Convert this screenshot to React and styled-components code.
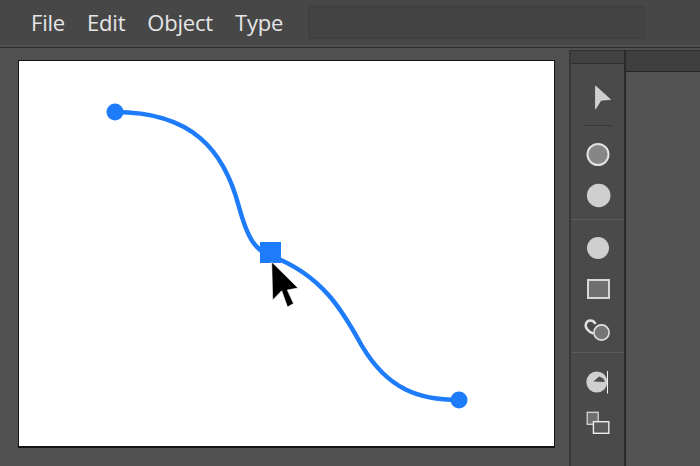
import React from "react";
import styled, { createGlobalStyle } from "styled-components";

const Global = createGlobalStyle`
  html, body { margin: 0; padding: 0; background: #505050; }
  body { width: 700px; height: 466px; overflow: hidden; font-family: "Open Sans", "Noto Sans", sans-serif; }
`;
const Window = styled.div`width:700px;height:466px;display:flex;flex-direction:column;background:#505050;`;
const MenuBar = styled.header`
  height:45px;flex:none;display:flex;align-items:center;box-sizing:content-box;
  background:#474747;border-bottom:2px solid #4f4f4f;box-shadow:0 1px 0 #2b2b2b;
  padding-left:31px;
`;
const Menu = styled.nav`display:flex;gap:22px;width:277px;flex:none;`;
const MenuItem = styled.span`font-size:22px;line-height:30px;color:#e6e6e6;margin-top:-1px;letter-spacing:-.2px;`;
const Search = styled.div`
  width:337px;height:33px;flex:none;box-sizing:border-box;margin-top:-1px;
  background:#434343;border:1px solid #3e3e3e;border-radius:3px;
`;
const Workspace = styled.main`flex:1;display:flex;min-height:0;margin-top:1px;`;
const CanvasArea = styled.section`width:569px;flex:none;padding:12px 0 0 18px;box-sizing:border-box;`;
const Artboard = styled.div`
  width:537px;height:388px;box-sizing:border-box;background:#fff;border:1px solid #141414;
  border-bottom-width:2px;position:relative;
`;
const ArtSvg = styled.svg`display:block;position:absolute;left:-1px;top:-1px;`;
const ToolPanel = styled.aside`
  width:57px;flex:none;box-sizing:border-box;margin-top:2px;
  border-left:2px solid #383838;border-right:2px solid #2a2a2a;border-top:1px solid #333;
  background:#4a4a4a;display:flex;flex-direction:column;
`;
const ToolHead = styled.div`height:12px;flex:none;background:#424242;border-bottom:1px solid #2f2f2f;`;
const ToolGroup = styled.div`
  display:flex;flex-direction:column;align-items:center;
  padding:${p=>p.$pad};
  border-bottom:${p=>p.$last?"none":"1px solid #5a5a5a"};
`;
const Tool = styled.div`height:41px;width:100%;display:flex;align-items:center;justify-content:center;`;
const Rule = styled.div`width:30px;height:1px;background:#3a3a3a;margin:7px 0 8px;`;
const SidePanel = styled.aside`flex:1;display:flex;flex-direction:column;margin-top:2px;`;
const SideHead = styled.div`height:20px;flex:none;background:#3f3f3f;border-bottom:1px solid #262626;border-top:1px solid #333;box-sizing:content-box;`;
const SideBody = styled.div`flex:1;background:#535353;margin-left:2px;`;

const Icon = ({ children }) => (
  <svg width="30" height="30" viewBox="0 0 30 30">{children}</svg>
);
const Light = "#cfcfcf";
const items = ["File", "Edit", "Object", "Type"];

export default function App() {
  return (
    <Window>
      <Global />
      <MenuBar>
        <Menu>{items.map(i => <MenuItem key={i}>{i}</MenuItem>)}</Menu>
        <Search />
      </MenuBar>
      <Workspace>
        <CanvasArea>
          <Artboard>
            <ArtSvg width="537" height="388" viewBox="18 60 537 388">
              <path d="M115 112 C192 112 224 150 239 207 C247 236 254 250 271 256 C325 276 345 316 362 346 C388 390 420 400 459 400" fill="none" stroke="#1e7bfa" strokeWidth="4.5" />
              <circle cx="115" cy="112" r="8.5" fill="#1e7bfa" />
              <circle cx="459" cy="400" r="8.5" fill="#1e7bfa" />
              <rect x="260" y="242" width="21" height="21" fill="#1e7bfa" />
              <path d="M271.7 262 L272.7 300 L281.7 290.7 L287.5 307 L293.5 303.5 L287.3 290 L298 288 Z" fill="#000" stroke="#fff" strokeWidth="0.6" />
            </ArtSvg>
          </Artboard>
        </CanvasArea>
        <ToolPanel>
          <ToolHead />
          <ToolGroup $pad="13px 0 3px">
            <Tool><Icon><path d="M12.5 3 L27.5 16.5 L18 17.2 L12.5 26 Z" fill={Light} stroke="#f0f0f0" strokeWidth=".6" /></Icon></Tool>
            <Rule />
            <Tool><Icon><circle cx="15" cy="14.5" r="10.5" fill="#868686" stroke="#e2e2e2" strokeWidth="2" /></Icon></Tool>
            <Tool><Icon><circle cx="15.7" cy="14.5" r="11.8" fill={Light} /></Icon></Tool>
          </ToolGroup>
          <ToolGroup $pad="7px 0 2px">
            <Tool><Icon><circle cx="15" cy="15" r="11" fill={Light} /></Icon></Tool>
            <Tool><Icon><rect x="5" y="6" width="21" height="18" fill="#6f6f6f" stroke="#d8d8d8" strokeWidth="2" /></Icon></Tool>
            <Tool><Icon>
              <path d="M10.5 18.5 C5 17 1.5 12 3 8.5 C4.5 5 10 4 12.5 9" fill="none" stroke="#e0e0e0" strokeWidth="2.4" />
              <circle cx="18.5" cy="17.5" r="7.6" fill="#767676" stroke="#e0e0e0" strokeWidth="1.6" />
            </Icon></Tool>
          </ToolGroup>
          <ToolGroup $pad="8px 0 0" $last>
            <Tool><Icon>
              <circle cx="13.8" cy="15" r="10.5" fill={Light} />
              <path d="M10.5 14.5 L16 9.5 C19 10 21 12 22 15 Z" fill="#4f4f4f" />
              <rect x="24" y="4" width="1" height="22.5" fill="#f2f2f2" />
            </Icon></Tool>
            <Tool><Icon>
              <rect x="4.2" y="4.3" width="11" height="12" fill="#6f6f6f" stroke="#d4d4d4" strokeWidth="1.3" />
              <rect x="10.4" y="13.7" width="15.4" height="11.6" fill="#5a5a5a" stroke="#ececec" strokeWidth="1.4" />
            </Icon></Tool>
          </ToolGroup>
        </ToolPanel>
        <SidePanel>
          <SideHead />
          <SideBody />
        </SidePanel>
      </Workspace>
    </Window>
  );
}
